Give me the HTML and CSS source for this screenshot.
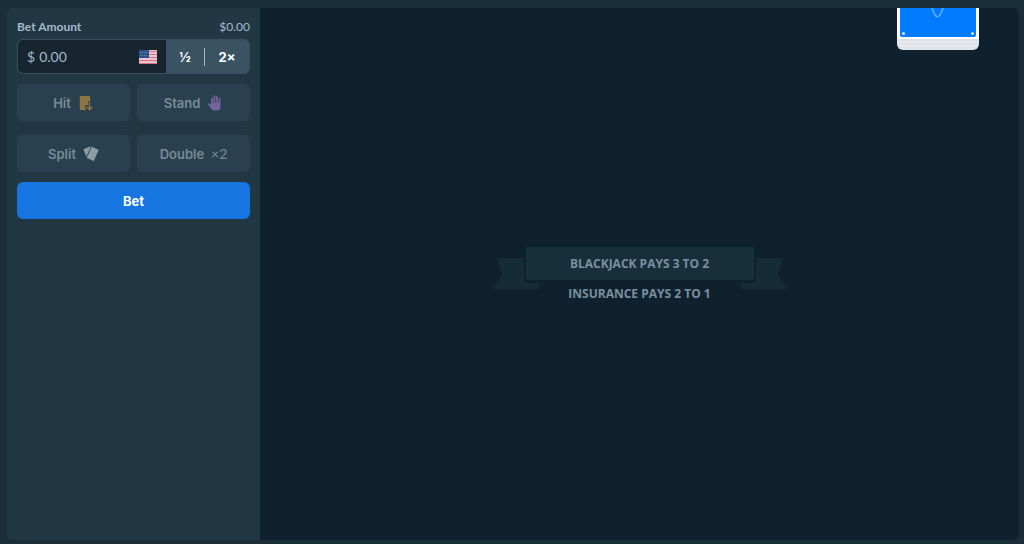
FILE: index.html
```
<!DOCTYPE html>
<html lang="en">
<head>
    <meta charset="UTF-8">
    <meta name="viewport" content="width=device-width, initial-scale=1.0">
    <title>Blackjack</title>
    <link rel="stylesheet" href="styles.css">
</head>
<body>
    <main class="game">
        <form class="sidebar">
            <div class="label-row">
                <label for="bet-amount">Bet Amount</label>
                <span class="converted">$0.00</span>
            </div>
            <div class="bet-group">
                <div class="bet-field">
                    <span class="dollar">$</span>
                    <input id="bet-amount" class="bet-input" type="text" inputmode="decimal" value="0.00">
                    <svg class="flag" width="18" height="14" viewBox="0 0 18 14" aria-hidden="true">
                        <rect width="18" height="14" fill="#e9c6cf"/>
                        <path d="M0 1.500h18M0 4.500h18M0 7.500h18M0 10.500h18M0 13.500h18" stroke="#dc7288" stroke-width="1"/>
                        <rect width="10" height="8" fill="#2f5288"/>
                        <path d="M1 2.500h8M1 5.500h8" stroke="#6684b0" stroke-width="1" stroke-dasharray="1 1"/>
                    </svg>
                </div>
                <button type="button" class="factor">½</button>
                <span class="divider"></span>
                <button type="button" class="factor">2×</button>
            </div>
            <div class="actions">
                <button type="button" class="action" disabled>Hit
                    <svg class="icon" width="16" height="16" viewBox="0 0 16 16" aria-hidden="true">
                        <path d="M3 1h8q1.200 0 1.200 1v4.500H10V10H8l-1 2 1.500 3H3q-1.200 0-1.200-1V2q0-1 1.200-1z" fill="#8c7443"/>
                        <path d="M11.500 7.500v7M8.800 12l2.700 2.700 2.700-2.700" fill="none" stroke="#8c7443" stroke-width="1.500"/>
                    </svg>
                </button>
                <button type="button" class="action" disabled>Stand
                    <svg class="icon" width="16" height="16" viewBox="0 0 16 16" aria-hidden="true">
                        <path d="M5 9V3.500M7.500 8V1.500M10 8V2M12.500 9V4" stroke="#73659c" stroke-width="1.800" stroke-linecap="round"/>
                        <path d="M4 8h9.500v4q0 3.500-3.500 3.500H7.500q-2 0-3.200-1.600L1.200 9.800Q.8 8.600 2 8.300q.8-.1 1.300.6L4 10z" fill="#73659c"/>
                    </svg>
                </button>
                <button type="button" class="action" disabled>Split
                    <svg class="icon" width="16" height="16" viewBox="0 0 16 16" aria-hidden="true">
                        <path d="M.6 4Q.4 3.300 1 3L6.500.700q.9-.3 1.300.5L5 12.500 4 12z" fill="#8d9ba3"/>
                        <rect x="5.500" y="1.500" width="8.500" height="13" rx="1" transform="rotate(24 10 8)" fill="#8d9ba3" stroke="#2a414f" stroke-width=".8"/>
                    </svg>
                </button>
                <button type="button" class="action" disabled>Double <span class="times">×2</span></button>
            </div>
            <button type="button" class="bet-button">Bet</button>
        </form>
        <section class="table">
            <div class="deck">
                <div class="card-back">
                    <svg class="card-mark" width="14" height="12" viewBox="0 0 14 12" aria-hidden="true">
                        <path d="M1 0Q4 8.800 6.500 8.800T12 0" fill="none" stroke="#63b3ff" stroke-width="1.500"/>
                    </svg>
                    <span class="dot"></span>
                    <span class="dot"></span>
                </div>
            </div>
            <div class="rules">
                <svg class="ribbon" width="294" height="44" viewBox="0 0 294 44" aria-hidden="true">
                    <path d="M4 11h28v23h14v6q0 2-2 2H2q-2 0-1-2l8-13z" fill="#152b38"/>
                    <path d="M290 11h-28v23h-14v6q0 2 2 2h42q2 0 1-2l-8-13z" fill="#152b38"/>
                    <rect x="31" y="0" width="232" height="36" rx="3" fill="#0f212e"/>
                    <rect x="33" y="0" width="228" height="33" rx="2" fill="#172e3b"/>
                </svg>
                <span class="rule">BLACKJACK PAYS 3 TO 2</span>
                <span class="rule">INSURANCE PAYS 2 TO 1</span>
            </div>
        </section>
    </main>
</body>
</html>
```
FILE: styles.css
```
* {
    box-sizing: border-box;
}
body {
    margin: 0;
    min-height: 100vh;
    display: flex;
    padding: 8px 5px 4px 7px;
    background-color: #1a2e39;
    font-family: Inter, "Liberation Sans", sans-serif;
}
button, input {
    font-family: inherit;
}
.game {
    flex: 1;
    display: flex;
    border-radius: 6px;
    overflow: hidden;
}
.sidebar {
    flex: none;
    width: 253px;
    padding: 10px;
    background-color: #213743;
}
.label-row {
    display: flex;
    justify-content: space-between;
    height: 21px;
    font-family: Lato, sans-serif;
    font-size: 12px;
    line-height: 18px;
    color: #a3bacb;
}
.label-row label {
    font-weight: 700;
}
.bet-group {
    display: flex;
    align-items: center;
    height: 35px;
    padding-right: 3px;
    border: 1px solid #38505e;
    border-radius: 6px;
    background-color: #3a5362;
    overflow: hidden;
}
.bet-field {
    flex: 1;
    align-self: stretch;
    display: flex;
    align-items: center;
    gap: 4px;
    min-width: 0;
    padding: 0 9px;
    background-color: #17252e;
    font-family: Lato, sans-serif;
    font-size: 14px;
    color: #a3bacb;
}
.bet-input {
    flex: 1;
    min-width: 0;
    padding: 0;
    border: none;
    background: none;
    font-size: 14px;
    color: inherit;
}
.factor {
    width: 38px;
    padding: 0;
    border: none;
    background: none;
    font-size: 13px;
    font-weight: 700;
    color: #fff;
    cursor: pointer;
}
.divider {
    width: 1px;
    height: 18px;
    margin-right: 3px;
    background-color: #a3bacb;
}
.actions {
    display: grid;
    grid-template-columns: 1fr 1fr;
    gap: 14px 7px;
    margin: 10px 0;
}
.action {
    display: flex;
    align-items: center;
    justify-content: center;
    gap: 7px;
    height: 37px;
    padding: 0;
    border: none;
    border-radius: 6px;
    background-color: #29414f;
    font-size: 13px;
    font-weight: 600;
    color: #788b98;
}
.times {
    font-family: Lato, sans-serif;
    font-size: 14px;
    font-weight: 400;
}
.bet-button {
    width: 100%;
    height: 37px;
    border: none;
    border-radius: 6px;
    background-color: #1675e1;
    font-size: 13px;
    font-weight: 700;
    color: #fff;
    cursor: pointer;
}
.table {
    position: relative;
    flex: 1;
    display: flex;
    justify-content: center;
    align-items: center;
    background-color: #0f212e;
}
.deck {
    position: absolute;
    top: 0;
    right: 40px;
    width: 82px;
    height: 42px;
    padding: 0 3px;
    border-radius: 0 0 6px 6px;
    background: linear-gradient(#fff 31px, #dfe3e8 31px 33px, #e6e9ed 33px 35px, #dfe3e8 35px 37px, #e6e9ed 37px 39px, #e1e5e9 39px);
}
.card-back {
    display: flex;
    justify-content: space-between;
    align-items: flex-end;
    height: 29px;
    padding: 0 2px 2px;
    border-radius: 0 0 2px 2px;
    background-color: #017bff;
}
.card-mark {
    order: 1;
    align-self: flex-start;
}
.dot {
    width: 3px;
    height: 3px;
    border-radius: 50%;
    background-color: #d6eaff;
}
.dot:last-child {
    order: 2;
}
.rules {
    position: relative;
    display: flex;
    flex-direction: column;
    align-items: center;
    width: 294px;
    margin-top: 6px;
    font-family: "Open Sans", sans-serif;
    font-size: 12px;
    font-weight: 700;
    color: #7a8f9f;
}
.ribbon {
    position: absolute;
    top: 0;
    left: 0;
}
.rule {
    position: relative;
    height: 30px;
    line-height: 34px;
}
```
